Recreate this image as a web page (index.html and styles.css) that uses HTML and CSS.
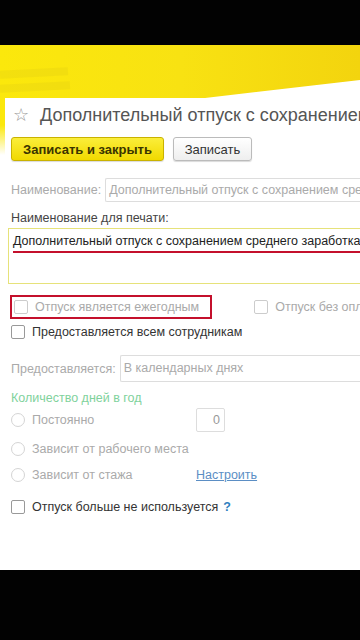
FILE: index.html
```html
<!DOCTYPE html>
<html lang="ru">
<head>
<meta charset="UTF-8">
<meta name="viewport" content="width=device-width, initial-scale=1.0">
<title>Дополнительный отпуск</title>
<link rel="stylesheet" href="styles.css">
</head>
<body>
<div class="top-bar"></div>
<div class="screen">
  <div class="stripe stripe-1"></div>
  <div class="stripe stripe-2"></div>
  <div class="panel">
    <div class="title-row">
      <span class="star">&#9734;</span>
      <span class="title">Дополнительный отпуск с сохранением среднего заработка</span>
    </div>

    <div class="buttons">
      <button class="btn btn-main">Записать и закрыть</button>
      <button class="btn">Записать</button>
    </div>

    <div class="field-row">
      <span class="label muted">Наименование:</span>
      <div class="input input-name muted">Дополнительный отпуск с сохранением среднего заработка</div>
    </div>

    <div class="print-label">Наименование для печати:</div>
    <div class="textarea">
      <div class="print-text">Дополнительный отпуск с сохранением среднего заработка</div>
    </div>

    <div class="check-row">
      <label class="check marked muted"><span class="box light"></span>Отпуск является ежегодным</label>
      <label class="check check-right muted"><span class="box light"></span>Отпуск без оплаты</label>
    </div>

    <label class="check check-all"><span class="box"></span>Предоставляется всем сотрудникам</label>

    <div class="field-row field-days">
      <span class="label muted">Предоставляется:</span>
      <div class="input input-days muted">В календарных днях</div>
    </div>

    <div class="group-title">Количество дней в год</div>

    <div class="radio-row row-first">
      <label class="radio muted"><span class="circle"></span>Постоянно</label>
      <div class="num-input">0</div>
    </div>
    <div class="radio-row row-second">
      <label class="radio muted"><span class="circle"></span>Зависит от рабочего места</label>
    </div>
    <div class="radio-row row-third">
      <label class="radio muted"><span class="circle"></span>Зависит от стажа</label>
      <a class="link" href="#">Настроить</a>
    </div>

    <label class="check check-last"><span class="box"></span>Отпуск больше не используется <span class="help">?</span></label>
  </div>
</div>
<div class="bottom-bar"></div>
</body>
</html>
```

FILE: styles.css
```css
body {
  margin: 0;
  padding: 0;
  background: #020202;
  font-family: 'Liberation Sans', Arial, sans-serif;
  font-size: 12.5px;
  color: #333;
  overflow: hidden;
}

.top-bar {
  height: 45px;
  background: #020202;
}

.screen {
  position: relative;
  height: 525px;
  background:
    linear-gradient(to bottom, rgba(255,255,255,0) 0, rgba(255,255,255,0) 80px, #fff 110px),
    linear-gradient(to right, #fbe80c 0, #f8e212 50%, #f3d40e 100%);
  overflow: hidden;
}

.stripe {
  position: absolute;
  left: 0;
  width: 68px;
  height: 8px;
  background: rgba(225, 205, 20, 0.3);
  transform: rotate(-3deg);
}

.stripe-1 { top: 24px; }
.stripe-2 { top: 38px; width: 70px; }

.panel {
  position: relative;
  margin: 35px 0 0 5px;
  height: 490px;
  background: #fff;
  padding: 22px 0 0 6px;
  box-sizing: border-box;
  clip-path: polygon(0 18px, 200px 18px, 100% 0, 100% 100%, 0 100%);
  white-space: nowrap;
  overflow: hidden;
}

.title-row {
  display: flex;
  align-items: center;
  height: 26px;
}

.star {
  flex: 0 0 27px;
  font-size: 18px;
  color: #999;
  margin-left: 2px;
}

.title {
  font-size: 18px;
  color: #555;
}

.buttons {
  display: flex;
  gap: 9px;
  margin-top: 9px;
}

.btn {
  height: 24px;
  padding: 0;
  font-family: inherit;
  font-size: 13px;
  color: #333;
  border: 1px solid #bbb;
  border-radius: 3px;
  background: linear-gradient(#fff, #eee);
  box-shadow: 0 1px 1px rgba(0,0,0,0.15);
}

.btn-main {
  width: 153px;
  border-color: #c9b200;
  background: linear-gradient(#fbee3a, #f1d900);
  font-weight: bold;
  color: #3a3400;
}

.btn:not(.btn-main) {
  width: 79px;
}

.muted {
  color: #aaa;
}

.field-row {
  display: flex;
  align-items: center;
  margin-top: 17px;
}

.label {
  margin-right: 4px;
}

.input {
  flex: 1;
  height: 24px;
  line-height: 22px;
  box-sizing: border-box;
  border: 1px solid #ddd;
  border-right: none;
  border-radius: 2px 0 0 2px;
  padding-left: 3px;
  overflow: hidden;
}

.input-days {
  height: 27px;
  line-height: 25px;
}

.field-days {
  margin-top: 15px;
}

.print-label {
  margin-top: 8px;
  line-height: 16px;
  color: #444;
}

.textarea {
  margin: 2px 0 0 -3px;
  height: 56px;
  box-sizing: border-box;
  border: 1px solid #e6e27a;
  border-right: none;
  padding: 4px 0 0 4px;
  overflow: hidden;
}

.print-text {
  color: #222;
  line-height: 17px;
  border-bottom: 2px solid #c4102c;
  padding-bottom: 1px;
}

.check-row {
  display: flex;
  align-items: center;
  margin-top: 11px;
  height: 24px;
}

.check {
  display: flex;
  align-items: center;
  line-height: 16px;
}

.box {
  flex: 0 0 14px;
  height: 14px;
  box-sizing: border-box;
  border: 1px solid #999;
  border-radius: 2px;
  margin-right: 7px;
  background: #fff;
}

.box.light {
  border-color: #ccc;
}

.marked {
  height: 24px;
  box-sizing: border-box;
  border: 2px solid #c4102c;
  padding: 0 11px 0 2px;
  margin-left: -1px;
}

.check-right {
  margin-left: 42px;
}

.check-all {
  margin-top: 5px;
}

.group-title {
  margin-top: 8px;
  line-height: 16px;
  color: #7fd29c;
}

.radio-row {
  display: flex;
  align-items: center;
  height: 24px;
}

.row-first { margin-top: 2px; }
.row-second { margin-top: 5px; }
.row-third { margin-top: 2px; }

.radio {
  display: flex;
  align-items: center;
  width: 185px;
}

.circle {
  flex: 0 0 14px;
  height: 14px;
  box-sizing: border-box;
  border: 1px solid #d4d4d4;
  border-radius: 50%;
  margin-right: 7px;
}

.num-input {
  width: 29px;
  height: 24px;
  box-sizing: border-box;
  border: 1px solid #ddd;
  border-radius: 2px;
  text-align: right;
  padding-right: 4px;
  line-height: 22px;
  color: #999;
}

.link {
  color: #5b8ec4;
  text-decoration: underline;
}

.check-last {
  margin-top: 10px;
  height: 20px;
}

.help {
  color: #2f7fbf;
  font-weight: bold;
  margin-left: 5px;
}

.bottom-bar {
  height: 70px;
  background: #020202;
}
```
